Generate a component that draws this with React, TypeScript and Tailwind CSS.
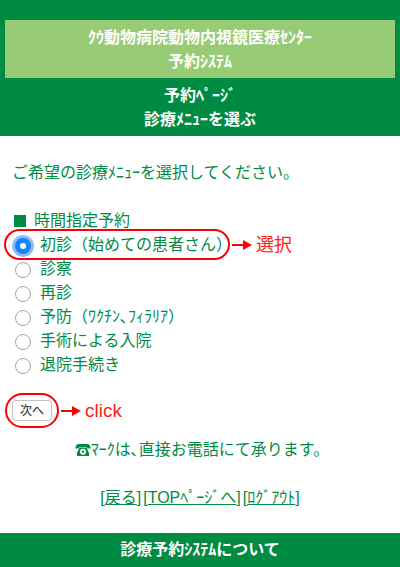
import { useState } from "react";

const MENUS = [
  { id: "first", label: "初診（始めての患者さん）" },
  { id: "exam", label: "診察" },
  { id: "revisit", label: "再診" },
  { id: "prevention", label: "予防（ﾜｸﾁﾝ､ﾌｨﾗﾘｱ）" },
  { id: "surgery", label: "手術による入院" },
  { id: "discharge", label: "退院手続き" },
];

export default function App() {
  const [menu, setMenu] = useState("first");

  return (
    <div className="bg-white font-['Liberation_Sans','Noto_Sans_CJK_JP',sans-serif] text-base text-[#008b43]">
      <header className="bg-[#008b43] px-[5px] pt-5 pb-1 text-center font-bold text-white">
        <h1 className="bg-[#98cb75] pt-[6px] pb-1">
          ｸｳ動物病院動物内視鏡医療ｾﾝﾀｰ
          <br />
          予約ｼｽﾃﾑ
        </h1>
        <h2 className="pt-[6px]">
          予約ﾍﾟｰｼﾞ
          <br />
          診療ﾒﾆｭｰを選ぶ
        </h2>
      </header>

      <main className="px-3 pt-[25px] pb-[23px]">
        <p>ご希望の診療ﾒﾆｭｰを選択してください。</p>

        <form onSubmit={(e) => e.preventDefault()}>
          <fieldset className="mt-6">
            <legend className="flex items-center gap-2">
              <span className="ml-[2px] size-3 bg-[#008b43]" />
              時間指定予約
            </legend>
            {MENUS.map((m) => (
              <div key={m.id} className="relative flex">
                <label className="flex">
                  <input
                    type="radio"
                    name="menu"
                    value={m.id}
                    checked={menu === m.id}
                    onChange={() => setMenu(m.id)}
                    className="mt-[5px] mr-[9px] ml-[3px] size-4 shrink-0 appearance-none rounded-full border border-[#a3a3a3] bg-white checked:border-[5px] checked:border-[#1384fb] checked:ring-3 checked:ring-[#8fbdf3]"
                  />
                  {m.label}
                </label>
                {m.id === "first" && <SelectNote />}
              </div>
            ))}
          </fieldset>

          <div className="relative mt-[23px] flex">
            <button
              type="submit"
              className="h-[21px] w-10 rounded-[4px] border border-[#c4c4c4] bg-white text-[12px] leading-[18px] text-[#222222]"
            >
              次へ
            </button>
            <ClickNote />
          </div>
        </form>

        <p className="mt-[17px] pl-1 text-center">
          <Phone />
          ﾏｰｸは､直接お電話にて承ります。
        </p>

        <nav className="mt-6 flex justify-center gap-[2px]">
          <span>[<a href="#back" className="underline">戻る</a>]</span>
          <span>[<a href="#top" className="underline">TOPﾍﾟｰｼﾞへ</a>]</span>
          <span>[<a href="#logout" className="underline">ﾛｸﾞｱｳﾄ</a>]</span>
        </nav>
      </main>

      <footer className="bg-[#008b43] py-[5px] text-center font-bold text-white">
        診療予約ｼｽﾃﾑについて
      </footer>
    </div>
  );
}

/* Red callouts laid over the form */
function SelectNote() {
  return (
    <div className="pointer-events-none absolute -top-1 -left-2 flex items-center text-[18px] leading-6 text-[#ff2010]">
      <span className="h-[31px] w-[226px] rounded-full border-2 border-[#fb0007]" />
      <Arrow />
      <span className="ml-1">選択</span>
    </div>
  );
}

function ClickNote() {
  return (
    <div className="pointer-events-none absolute -top-[7px] -left-[7px] flex items-center text-[19px] leading-6 text-[#ff2010]">
      <span className="h-[35px] w-[54px] rounded-full border-2 border-[#fb0007]" />
      <Arrow />
      <span className="ml-1">click</span>
    </div>
  );
}

function Arrow() {
  return (
    <svg viewBox="0 0 20 10" className="ml-[2px] h-[10px] w-5" fill="#fb0007">
      <path d="M0 4h11V0l9 5-9 5V6H0z" />
    </svg>
  );
}

function Phone() {
  return (
    <svg viewBox="0 0 16 14" className="inline h-[14px] w-4 align-[-2px]" fill="currentColor" fillRule="evenodd">
      <path d="M4 1h8c2.500 0 3.500 1.500 3.500 4.500h-3L11.500 4h-7L3.500 5.500h-3C.5 2.500 1.500 1 4 1z" />
      <path d="M4.500 4.500h7L14 10v3H2v-3zM8 5.800a3 3 0 1 0 0 6 3 3 0 0 0 0-6zM8 7.600a1.200 1.200 0 1 1 0 2.400 1.200 1.200 0 0 1 0-2.400z" />
    </svg>
  );
}
